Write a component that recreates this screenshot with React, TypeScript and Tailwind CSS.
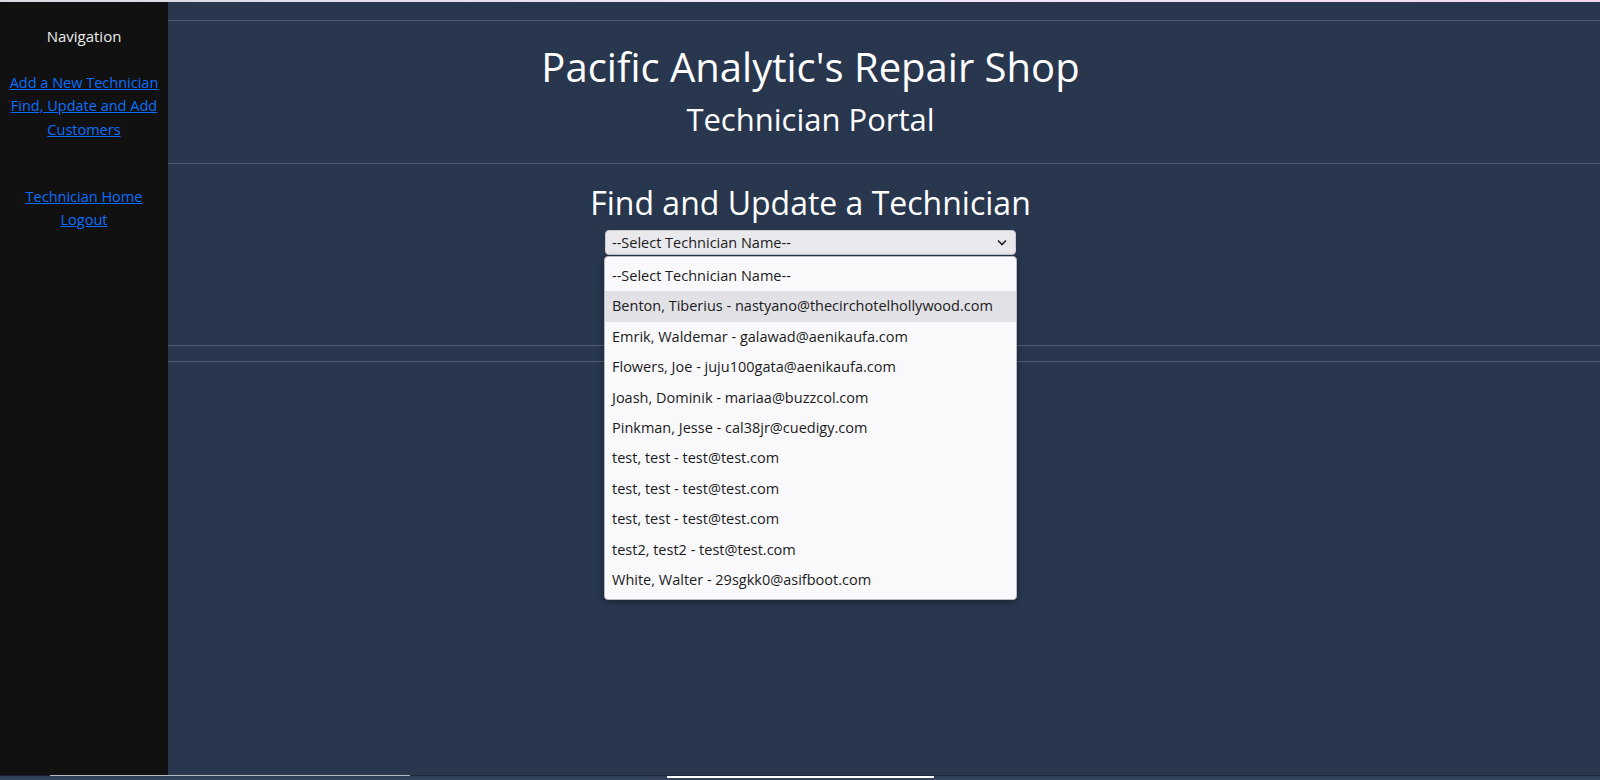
import { useState } from 'react'

const technicians = [
	'Benton, Tiberius - nastyano@thecirchotelhollywood.com',
	'Emrik, Waldemar - galawad@aenikaufa.com',
	'Flowers, Joe - juju100gata@aenikaufa.com',
	'Joash, Dominik - mariaa@buzzcol.com',
	'Pinkman, Jesse - cal38jr@cuedigy.com',
	'test, test - test@test.com',
	'test, test - test@test.com',
	'test, test - test@test.com',
	'test2, test2 - test@test.com',
	'White, Walter - 29sgkk0@asifboot.com',
]

const font = { fontFamily: '"Open Sans", "Noto Sans", sans-serif' }

function Sidebar() {
	return (
		<nav className="w-[168px] shrink-0 bg-[#111111] flex flex-col items-center text-center text-[14.5px] leading-[23.5px] pt-[23px]">
			<div className="text-[#ececec] text-[15px]">Navigation</div>
			<div className="mt-[22px] flex flex-col items-center">
				<a href="#" className="text-[#0d6efd] underline whitespace-nowrap">Add a New Technician</a>
				<a href="#" className="text-[#0d6efd] underline">
					Find, Update and Add
					<br />
					Customers
				</a>
			</div>
			<div className="mt-[45px] flex flex-col items-center leading-[22.5px]">
				<a href="#" className="text-[#0d6efd] underline">Technician Home</a>
				<a href="#" className="text-[#0d6efd] underline">Logout</a>
			</div>
		</nav>
	)
}

function TechnicianSelect() {
	const [active] = useState(0)
	return (
		<div className="relative w-[411px] text-[14.5px] text-[#1b1b1b]">
			<div className="h-[25px] rounded-[4px] border border-[#c9c9d1] bg-[#e9e9ed] flex items-center justify-between pl-[6px] pr-[8px]">
				<span>--Select Technician Name--</span>
				<svg width="10" height="7" viewBox="0 0 10 7" fill="none">
					<polyline points="1,1.5 5,5.5 9,1.5" stroke="#222" strokeWidth="1.6" />
				</svg>
			</div>
			<ul className="absolute left-[-1px] top-[26px] w-[413px] rounded-[4px] bg-[#f9f9fb] border border-[#b9b9c2] shadow-[0_2px_6px_rgba(0,0,0,0.35)] pt-[4px] pb-[4px] text-left">
				<li className="h-[30.4px] leading-[30.4px] pl-[7px]">--Select Technician Name--</li>
				{technicians.map((t, i) => (
					<li key={i} className={`h-[30.4px] leading-[30.4px] pl-[7px] ${i === active ? 'bg-[#e1e1e6]' : ''}`}>
						{t}
					</li>
				))}
			</ul>
		</div>
	)
}

export default function App() {
	return (
		<div className="w-[1600px] h-[780px] flex flex-col overflow-hidden bg-[#28364e]" style={font}>
			<div className="h-[2px] bg-gradient-to-r from-[#d9d9e0] via-[#f1e6f8] to-[#f7d9ef]" />
			<div className="flex flex-1 min-h-0">
				<Sidebar />
				<main className="flex-1 bg-[#28364e] text-white flex flex-col">
					<hr className="mt-[18px] border-0 border-t border-[#4e5b70]" />
					<h1 className="mt-[22px] pr-[147px] text-center text-[40px] leading-[48px]">Pacific Analytic's Repair Shop</h1>
					<h2 className="mt-[10px] pr-[147px] text-center text-[31px] leading-[37px]">Technician Portal</h2>
					<hr className="mt-[25px] border-0 border-t border-[#4e5b70]" />
					<h3 className="mt-[20px] pr-[147px] text-center text-[32px] leading-[38px]">Find and Update a Technician</h3>
					<div className="mt-[8px] pr-[147px] flex justify-center">
						<TechnicianSelect />
					</div>
					<hr className="mt-[90px] border-0 border-t border-[#4e5b70]" />
					<hr className="mt-[15px] border-0 border-t border-[#4e5b70]" />
				</main>
			</div>
			<div className="h-[5px] flex flex-col">
				<div className="h-[1px] flex">
					<div className="w-[50px] bg-[#1b2130]" />
					<div className="w-[360px] bg-[#b5bac3]" />
					<div className="flex-1 bg-[#1e2636]" />
				</div>
				<div className="h-[2px] flex">
					<div className="w-[667px] bg-[#2f3d55]" />
					<div className="w-[267px] bg-white" />
					<div className="flex-1 bg-[#2f3d55]" />
				</div>
				<div className="h-[2px] bg-[#36455e]" />
			</div>
		</div>
	)
}
